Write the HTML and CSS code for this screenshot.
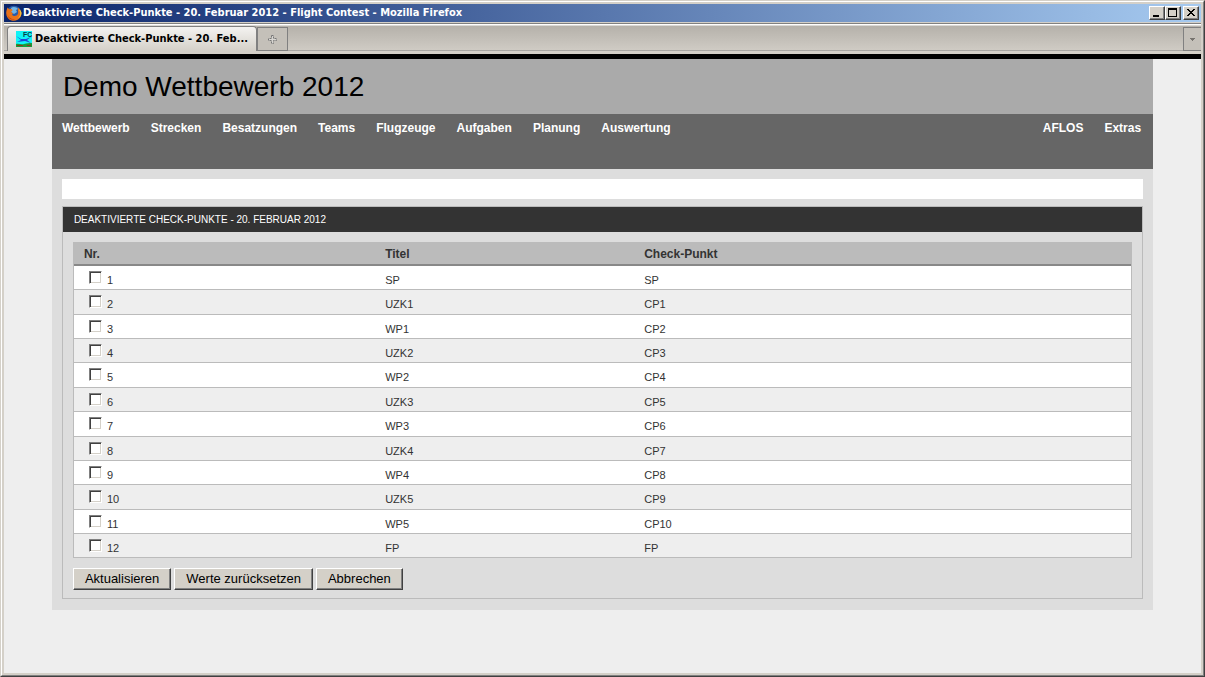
FILE: index.html
```
<!DOCTYPE html>
<html lang="de">
<head>
<meta charset="utf-8">
<title>Deaktivierte Check-Punkte - 20. Februar 2012 - Flight Contest</title>
<link rel="stylesheet" href="styles.css">
</head>
<body>
<div class="window">
  <header class="titlebar">
    <svg class="app-icon" width="16" height="16" viewBox="0 0 16 16" aria-hidden="true">
      <circle cx="8" cy="8" r="7.3" fill="#2a5ba8"/>
      <path d="M5 3c2-2 6-1 7 1l-2 1 1 2-3 2-3-2z" fill="#6fb4e6"/>
      <path d="M1.500 2.500 3.200 4.200 5.500 3.800 6.500 5.500 5 7l2 1.200-1 1.600c1.500 2 5 1.500 6-1 .5-2-.5-4 0-6C15 5 16 8 15 11c-1.500 4-6 5.500-9.500 4.500C1 14-.5 9.500.5 5.500z" fill="#e8731a"/>
      <path d="M13 4.500c2 3 1.500 7-1.500 9 2-.5 4-3 4-5.500 0-1.500-1-3-2.500-3.500z" fill="#f9c53a"/>
      <path d="M1 8c.5 4 4 6.500 8 6-3 1.500-7 .5-8-6z" fill="#c23c12"/>
    </svg>
    <span class="titlebar-text">Deaktivierte Check-Punkte - 20. Februar 2012 - Flight Contest - Mozilla Firefox</span>
    <div class="window-buttons">
      <button type="button" class="win-btn" aria-label="Minimieren"><svg width="12" height="10" viewBox="0 0 12 10"><path d="M2 7h6v2H2z"/></svg></button>
      <button type="button" class="win-btn" aria-label="Maximieren"><svg width="12" height="10" viewBox="0 0 12 10"><path d="M1 0h9v9H1zM2 2v6h7V2z" fill-rule="evenodd"/></svg></button>
      <button type="button" class="win-btn win-close" aria-label="Schließen"><svg width="12" height="10" viewBox="0 0 12 10"><path d="M2 1h2v1h1v1h2V2h1V1h2v1H9v1H8v1H7v1h1v1h1v1h1v1H8V7H7V6H5v1H4v1H2V7h1V6h1V5h1V4H4V3H3V2H2z"/></svg></button>
    </div>
  </header>
  <div class="tabbar">
    <a class="tab" href="#">
      <svg width="16" height="16" viewBox="0 0 16 16" aria-hidden="true">
        <path fill="#12f4f6" d="M0 0h16v16H0z"/>
        <text class="favicon-text" x="7" y="6">FC</text>
        <path d="M0 5l5 3h5l5-2-4 3 4 3-6-2-8 1 4-2z" fill="#1c46d8"/>
        <path d="M0 13c3-1 5 1 8 0s5-1 8-1v4H0z" fill="#1a9a3a"/>
        <path d="M1 14.500h6M11 14.500h4" stroke="#8a3a20"/>
      </svg>
      <span>Deaktivierte Check-Punkte - 20. Feb...</span>
    </a>
    <button type="button" class="new-tab" aria-label="Neuer Tab"><svg width="9" height="9" viewBox="0 0 9 9"><path d="M3.500.5h2v3h3v2h-3v3h-2v-3h-3v-2h3z" fill="#d8d6d2" stroke="#777" stroke-dasharray="2 1"/></svg></button>
    <button type="button" class="all-tabs" aria-label="Alle Tabs"><svg width="5" height="3" viewBox="0 0 5 3"><path d="M0 0h5v1H4v1H3v1H2V2H1V1H0z" fill="#77746f"/></svg></button>
  </div>
  <div class="viewport">
    <div class="page">
      <h1 class="contest">Demo Wettbewerb 2012</h1>
      <nav class="menu">
        <a href="#">Wettbewerb</a>
        <a href="#">Strecken</a>
        <a href="#">Besatzungen</a>
        <a href="#">Teams</a>
        <a href="#">Flugzeuge</a>
        <a href="#">Aufgaben</a>
        <a href="#">Planung</a>
        <a href="#">Auswertung</a>
        <a href="#" class="menu-right">AFLOS</a>
        <a href="#">Extras</a>
      </nav>
      <main class="content">
        <div class="message"></div>
        <form class="box">
          <h2 class="box-title">DEAKTIVIERTE CHECK-PUNKTE - 20. FEBRUAR 2012</h2>
          <div class="box-body">
            <table class="points">
              <thead>
                <tr><th class="col-nr">Nr.</th><th class="col-title">Titel</th><th>Check-Punkt</th></tr>
              </thead>
              <tbody>
                <tr><td><label><input type="checkbox">1</label></td><td>SP</td><td>SP</td></tr>
                <tr><td><label><input type="checkbox">2</label></td><td>UZK1</td><td>CP1</td></tr>
                <tr><td><label><input type="checkbox">3</label></td><td>WP1</td><td>CP2</td></tr>
                <tr><td><label><input type="checkbox">4</label></td><td>UZK2</td><td>CP3</td></tr>
                <tr><td><label><input type="checkbox">5</label></td><td>WP2</td><td>CP4</td></tr>
                <tr><td><label><input type="checkbox">6</label></td><td>UZK3</td><td>CP5</td></tr>
                <tr><td><label><input type="checkbox">7</label></td><td>WP3</td><td>CP6</td></tr>
                <tr><td><label><input type="checkbox">8</label></td><td>UZK4</td><td>CP7</td></tr>
                <tr><td><label><input type="checkbox">9</label></td><td>WP4</td><td>CP8</td></tr>
                <tr><td><label><input type="checkbox">10</label></td><td>UZK5</td><td>CP9</td></tr>
                <tr><td><label><input type="checkbox">11</label></td><td>WP5</td><td>CP10</td></tr>
                <tr><td><label><input type="checkbox">12</label></td><td>FP</td><td>FP</td></tr>
              </tbody>
            </table>
            <div class="actions">
              <button type="button">Aktualisieren</button>
              <button type="button">Werte zurücksetzen</button>
              <button type="button">Abbrechen</button>
            </div>
          </div>
        </form>
      </main>
    </div>
  </div>
</div>
</body>
</html>
```

FILE: styles.css
```
* { box-sizing: border-box; }

body {
  margin: 0;
  border: 1px solid #404040;
  border-top-color: #d4d0c8;
  border-left-color: #d4d0c8;
  min-height: 100vh;
  display: flex;
  flex-direction: column;
  font-family: "Liberation Sans", Arial, sans-serif;
  color: #333;
}

a { color: inherit; text-decoration: none; }

/* Window frame */
.window {
  flex: 1;
  display: flex;
  flex-direction: column;
  border: 1px solid #808080;
  border-top-color: #fff;
  border-left-color: #fff;
  padding: 2px;
  background: #d4d0c8;
}

.titlebar {
  display: flex;
  align-items: center;
  gap: 1px;
  height: 18px;
  padding: 0 2px;
  background: linear-gradient(90deg, #0a246a, #a6caf0);
  color: #fff;
  font: bold 11px/18px "DejaVu Sans Condensed", "DejaVu Sans", Tahoma, sans-serif;
  white-space: nowrap;
}

.app-icon { flex: none; }
.titlebar-text { flex: 1; }

.window-buttons { display: flex; }

.win-btn {
  width: 16px;
  height: 14px;
  padding: 0;
  display: flex;
  align-items: center;
  justify-content: center;
  background: #d4d0c8;
  border: 1px solid #404040;
  border-top-color: #fff;
  border-left-color: #fff;
  box-shadow: inset -1px -1px #808080;
}

.win-close { margin-left: 2px; }

/* Tab strip */
.tabbar {
  display: flex;
  align-items: flex-end;
  height: 31px;
  margin-top: 1px;
  padding-left: 3px;
  border-top: 1px solid #808080;
  border-bottom: 3px solid #d4d0c8;
  background: linear-gradient(#fff 1px, #b5b1aa 2px, #cfcbc4 26px, #808080 27px);
}

.tab {
  display: flex;
  align-items: center;
  gap: 3px;
  width: 250px;
  height: 25px;
  padding: 0 8px;
  border: 1px solid #808080;
  border-bottom: 0;
  border-radius: 4px 4px 0 0;
  background: linear-gradient(#f4f3f1, #d4d0c8);
  color: #000;
  font: bold 11px/16px "DejaVu Sans Condensed", "DejaVu Sans", Tahoma, sans-serif;
  white-space: nowrap;
}

.favicon-text {
  font: bold 7px "Liberation Sans", Arial, sans-serif;
  fill: #064048;
}

.new-tab,
.all-tabs {
  display: flex;
  align-items: center;
  justify-content: center;
  height: 24px;
  padding: 0;
  border: 1px solid #808080;
  background: #c4c0b9;
}

.new-tab { width: 31px; }
.all-tabs { width: 18px; margin-left: auto; border-right: 0; }

/* Web page */
.viewport {
  flex: 1;
  border-top: 5px solid #000;
  background: #eee;
}

.page {
  width: 92%;
  margin: 0 auto;
  background: #ddd;
}

.contest {
  margin: 0;
  padding: 12px 11px 11px;
  background: #aaa;
  color: #000;
  font-size: 28px;
  font-weight: normal;
  line-height: 32px;
}

.menu {
  display: flex;
  gap: 21px;
  height: 55px;
  padding: 6px 12px 0 10px;
  background: #666;
  color: #fff;
  font-size: 12px;
  font-weight: bold;
  line-height: 16px;
}

.menu-right { margin-left: auto; }

.content { padding: 10px 10px 11px; }

.message {
  height: 20px;
  margin-bottom: 7px;
  background: #fff;
}

.box { border: 1px solid #bbb; }

.box-title {
  margin: 0;
  padding: 0 11px;
  background: #333;
  color: #fff;
  font-size: 10px;
  font-weight: normal;
  line-height: 25px;
}

.box-body { padding: 10px 10px 8px; }

.points {
  width: 100%;
  border-spacing: 0;
  border: 1px solid #bbb;
  border-top: 0;
  table-layout: fixed;
  font-size: 11px;
  text-align: left;
}

.points th {
  height: 24px;
  padding: 2px 10px 0;
  border-bottom: 2px solid #888;
  background: #bbb;
  font-size: 12px;
}

.col-nr { width: 28.5%; }
.col-title { width: 24.5%; }

.points td {
  height: 24px;
  padding: 4px 10px 0;
  border-bottom: 1px solid #bbb;
  background: #fff;
  line-height: 16px;
}

.points tr:nth-child(even) td { background: #eee; }
.points tr:nth-child(5n) td,
.points tr:nth-child(5n + 2) td { height: 25px; }
.points tr:last-child td { height: 23px; border-bottom: 0; }

.points label {
  display: flex;
  align-items: flex-start;
  gap: 5px;
  height: 16px;
  padding-left: 5px;
}

.points input {
  appearance: none;
  width: 13px;
  height: 13px;
  margin: -1px 0 0;
  background: #fff;
  border: 1px solid #fff;
  border-top-color: #808080;
  border-left-color: #808080;
  box-shadow: inset 1px 1px #404040, inset -1px -1px #d4d0c8;
}

.actions {
  display: flex;
  gap: 3px;
  margin-top: 10px;
}

.actions button {
  height: 22px;
  padding: 0 11px;
  background: #d4d0c8;
  border: 1px solid #404040;
  border-top-color: #fff;
  border-left-color: #fff;
  box-shadow: inset -1px -1px #808080;
  color: #000;
  font: 13px/20px "Liberation Sans", Arial, sans-serif;
}
```
